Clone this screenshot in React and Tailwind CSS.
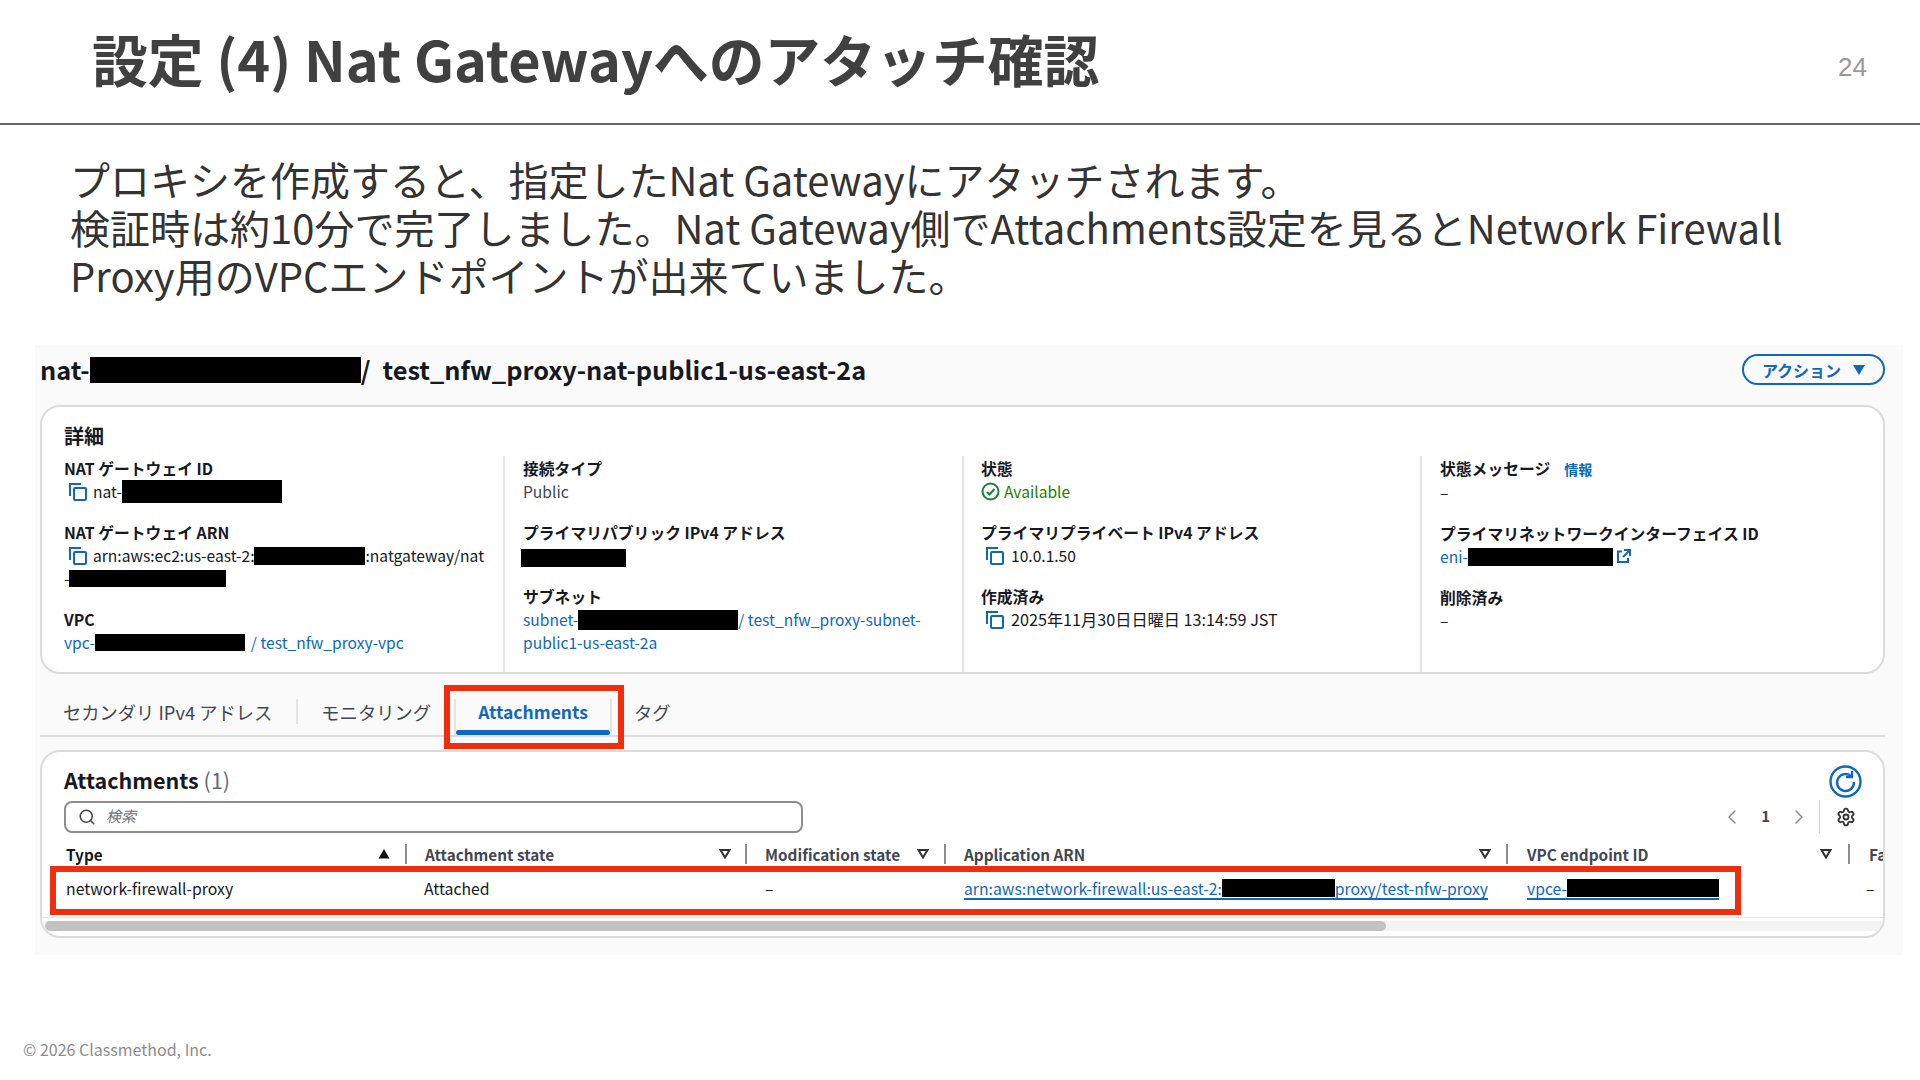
import { Search, ChevronLeft, ChevronRight, Settings } from 'lucide-react'

const Redact = ({ className }) => <span className={`inline-block bg-black align-middle ${className}`} />

const CopyIcon = () => (
  <svg width="20" height="19" viewBox="0 0 20 19" fill="none" stroke="#1166bb" strokeWidth="2" className="shrink-0">
    <path d="M2 14V2h11" />
    <rect x="6" y="6" width="12" height="12" rx="1" />
  </svg>
)

const Caret = ({ filled }) => (
  <svg width="12" height="10" viewBox="0 0 12 10" className="shrink-0">
    {filled ? (
      <path d="M6 0l5.500 9.500H.5z" fill="#111" />
    ) : (
      <path d="M1.500 1h9L6 8.500z" fill="none" stroke="#333" strokeWidth="2" />
    )}
  </svg>
)

function Field({ label, children, extra }) {
  return (
    <div className="mb-[18px]">
      <div className="text-[15.8px] font-bold text-[#16191f]">
        {label}
        {extra}
      </div>
      <div className="text-[#16191f]">{children}</div>
    </div>
  )
}

const headers = [
  { name: 'Type', w: 'w-[339px]', sort: true, pad: 'pr-[15px]' },
  { name: 'Attachment state', w: 'w-[340px]', pad: 'pl-[18px] pr-[14px] border-l-2' },
  { name: 'Modification state', w: 'w-[199px]', pad: 'pl-[18px] pr-[15px] border-l-2' },
  { name: 'Application ARN', w: 'w-[562px]', pad: 'pl-[18px] pr-[15px] border-l-2' },
  { name: 'VPC endpoint ID', w: 'w-[342px]', pad: 'pl-[19px] pr-[16px] border-l-2' },
]

export default function App() {
  return (
    <div className="relative w-[1920px] h-[1080px] overflow-hidden bg-white font-['Noto_Sans_CJK_JP','Noto_Sans',sans-serif]">
      <header className="flex h-[125px] items-center justify-between border-b-2 border-[#666666] pl-[92px] pr-[53px]">
        <h1 className="mb-[7px] text-[55.8px] font-bold leading-none text-[#404040]">設定 (4) Nat Gatewayへのアタッチ確認</h1>
        <span className="mt-[12px] font-['Liberation_Sans',sans-serif] text-[26px] text-[#999999]">24</span>
      </header>

      <div className="pl-[70px] pt-[30px] text-[40px] leading-[48px] text-[#333333]">
        <div>プロキシを作成すると、指定したNat Gatewayにアタッチされます。</div>
        <div>検証時は約10分で完了しました。Nat Gateway側でAttachments設定を見るとNetwork Firewall</div>
        <div>Proxy用のVPCエンドポイントが出来ていました。</div>
      </div>

      <section className="ml-[35px] mt-[46px] h-[610px] w-[1868px] bg-[#fafafa] px-[5px] pt-[8px]">
        <div className="flex h-[52px] items-start justify-between pr-[13px]">
          <h2 className="flex h-[34px] items-center text-[25.3px] font-bold text-[#16191f]">
            nat-
            <Redact className="h-[26px] w-[271px]" />
            <span>/</span>
            <span className="ml-[12px]">test_nfw_proxy-nat-public1-us-east-2a</span>
          </h2>
          <button className="mt-[1px] flex h-[31px] w-[143px] items-center justify-center gap-[12px] rounded-full border-2 border-[#0f68bd] text-[16px] font-bold text-[#0f68bd]">
            アクション
            <svg width="12" height="10" viewBox="0 0 12 10"><path d="M0 0h12L6 10z" fill="#0f68bd" /></svg>
          </button>
        </div>

        {/* 詳細 */}
        <div className="h-[269px] w-[1845px] rounded-[20px] border-2 border-[#dcdcdc] bg-white pl-[22px] pt-[14px] text-[15.6px] leading-[23px]">
          <div className="text-[20px] font-bold leading-[30px] text-[#16191f]">詳細</div>
          <div className="mt-[5px] grid h-[199px] grid-cols-[439px_459px_458px_451px]">
            <div>
              <div className="pt-[1px]">
                <Field label="NAT ゲートウェイ ID">
                  <div className="flex items-center gap-[5px] pl-[4px]">
                    <CopyIcon />
                    nat-
                    <Redact className="-ml-[5px] h-[23px] w-[160px]" />
                  </div>
                </Field>
                <Field label="NAT ゲートウェイ ARN">
                  <div className="flex items-center gap-[5px] pl-[4px]">
                    <CopyIcon />
                    <span className="flex items-center whitespace-nowrap">
                      arn:aws:ec2:us-east-2:
                      <Redact className="h-[18px] w-[111px]" />
                      :natgateway/nat
                    </span>
                  </div>
                  <div className="flex items-center">
                    -<Redact className="h-[17px] w-[157px]" />
                  </div>
                </Field>
                <Field label="VPC">
                  <div className="flex items-center text-[#0f68bd]">
                    vpc-
                    <Redact className="h-[17px] w-[150px]" />
                    <span className="ml-[6px]">/ test_nfw_proxy-vpc</span>
                  </div>
                </Field>
              </div>
            </div>

            <div className="border-l-2 border-[#e4e4e4] pl-[18px] pt-[1px]">
              <Field label="接続タイプ">
                <span className="text-[#414750]">Public</span>
              </Field>
              <Field label="プライマリパブリック IPv4 アドレス">
                <Redact className="-ml-[2px] h-[18px] w-[105px]" />
              </Field>
              <Field label="サブネット">
                <div className="text-[#0f68bd]">
                  <div className="flex items-center whitespace-nowrap">
                    subnet-
                    <Redact className="h-[20px] w-[160px]" />
                    / test_nfw_proxy-subnet-
                  </div>
                  <div>public1-us-east-2a</div>
                </div>
              </Field>
            </div>

            <div className="border-l-2 border-[#e4e4e4] pl-[17px] pt-[1px]">
              <Field label="状態">
                <div className="flex items-center gap-[4px] text-[#1d8102]">
                  <svg width="19" height="19" viewBox="0 0 19 19" fill="none" stroke="#1a7f37" strokeWidth="2" className="shrink-0">
                    <circle cx="9.5" cy="9.5" r="8" />
                    <path d="M6 10l2.500 2.500L13.500 7" />
                  </svg>
                  Available
                </div>
              </Field>
              <Field label="プライマリプライベート IPv4 アドレス">
                <div className="flex items-center gap-[6px] pl-[4px]">
                  <CopyIcon />
                  10.0.1.50
                </div>
              </Field>
              <Field label="作成済み">
                <div className="flex items-center gap-[6px] pl-[4px] text-[16.2px]">
                  <CopyIcon />
                  2025年11月30日日曜日 13:14:59 JST
                </div>
              </Field>
            </div>

            <div className="border-l-2 border-[#e4e4e4] pl-[18px] pt-[1px]">
              <Field
                label="状態メッセージ"
                extra={<span className="ml-[14px] text-[14px] font-bold text-[#0f68bd]">情報</span>}
              >
                –
              </Field>
              <Field label="プライマリネットワークインターフェイス ID">
                <div className="flex items-center gap-[3px] text-[#0f68bd]">
                  eni-
                  <Redact className="-ml-[3px] h-[18px] w-[145px]" />
                  <svg width="15" height="15" viewBox="0 0 15 15" fill="none" stroke="#0f68bd" strokeWidth="2" className="shrink-0">
                    <path d="M6 2.500H2v10.500h10V9M8 1h6v6M14 1L7 8" />
                  </svg>
                </div>
              </Field>
              <Field label="削除済み">–</Field>
            </div>
          </div>
        </div>

        {/* タブ */}
        <div className="flex h-[63px] w-[1845px] items-end border-b-2 border-[#dcdcdc] pl-[23px] text-[18.3px] text-[#414750]">
          <div className="flex h-[45px] items-start pt-[9px]">
            <span className="pr-[24px] leading-[26px]">セカンダリ IPv4 アドレス</span>
            <span className="h-[25px] border-l-2 border-[#e4e4e4]" />
            <span className="pl-[23px] pr-[23px] leading-[26px]">モニタリング</span>
            <span className="relative flex h-[36px] w-[158px] justify-center border-x-2 border-[#e4e4e4] border-b-0 text-[17.5px] font-bold leading-[26px] text-[#0f68bd]">
              Attachments
              <span className="absolute inset-x-0 bottom-0 h-[5px] rounded-full bg-[#0f68bd]" />
              <span className="absolute -bottom-[14px] -left-[12px] -right-[14px] -top-[14px] border-[6px] border-[#ee2e0c]" />
            </span>
            <span className="pl-[22px] leading-[26px]">タグ</span>
          </div>
        </div>

        {/* Attachments */}
        <div className="relative mt-[13px] h-[188px] w-[1845px] overflow-hidden rounded-[20px] border-2 border-[#dcdcdc] bg-white pt-[10px] text-[#16191f]">
          <div className="flex justify-between pl-[22px] pr-[19px]">
            <div className="pt-[1px] text-[21.500px] font-bold leading-[34px]">
              Attachments <span className="font-normal text-[#5f6b7a]">(1)</span>
            </div>
            <div className="flex h-[38px] w-[38px] items-center justify-center">
              <svg width="33" height="33" viewBox="0 0 33 33" fill="none" stroke="#0f68bd" strokeWidth="2.4">
                <circle cx="16.5" cy="16.5" r="15" />
                <path d="M22.500 11.500A8.500 8.500 0 1 0 25 17" />
                <path d="M23 6v6h-6" />
              </svg>
            </div>
          </div>

          <div className="flex items-center justify-between pl-[22px] pr-[27px]">
            <div className="flex h-[32px] w-[739px] items-center gap-[10px] rounded-[8px] border-2 border-[#8d8d8d] pl-[12px]">
              <Search size={18} color="#414750" strokeWidth={2} />
              <span className="text-[15px] italic text-[#727272]">検索</span>
            </div>
            <div className="flex h-[33px] items-center text-[#414750]">
              <ChevronLeft size={24} color="#8d8d8d" strokeWidth={1.5} />
              <span className="mx-[17px] text-[15px] font-bold">1</span>
              <ChevronRight size={24} color="#8d8d8d" strokeWidth={1.5} />
              <span className="ml-[8px] mr-[16px] h-[33px] border-l border-[#d0d0d0]" />
              <Settings size={20} color="#333" strokeWidth={2.2} />
            </div>
          </div>

          {/* テーブル */}
          <div className="mt-[9px] flex h-[24px] items-center pl-[24px] text-[15.3px] font-bold leading-[20px] text-[#414750]">
            {headers.map((h) => (
              <div key={h.name} className={`flex h-[20px] shrink-0 items-center justify-between border-[#8d8d8d] ${h.w} ${h.pad}`}>
                <span className={h.sort ? 'text-[#16191f]' : ''}>{h.name}</span>
                <Caret filled={h.sort} />
              </div>
            ))}
            <div className="h-[20px] shrink-0 border-l-2 border-[#8d8d8d] pl-[19px]">Fa</div>
          </div>

          <div className="relative flex h-[52px] items-center border-b border-[#e4e4e4] pb-[5px] pl-[24px] text-[15.8px] text-[#16191f]">
            <div className="w-[339px] shrink-0">network-firewall-proxy</div>
            <div className="w-[342px] shrink-0 pl-[19px]">Attached</div>
            <div className="w-[198px] shrink-0 pl-[18px]">–</div>
            <div className="w-[562px] shrink-0 pl-[19px]">
              <span className="flex w-fit items-center whitespace-nowrap border-b-2 border-[#0f68bd] text-[15.75px] leading-[19px] text-[#0f68bd]">
                arn:aws:network-firewall:us-east-2:
                <Redact className="h-[18px] w-[113px]" />
                proxy/test-nfw-proxy
              </span>
            </div>
            <div className="w-[341px] shrink-0 pl-[20px]">
              <span className="flex w-fit items-center border-b-2 border-[#0f68bd] text-[15.7px] leading-[19px] text-[#0f68bd]">
                vpce-
                <Redact className="h-[18px] w-[152px]" />
              </span>
            </div>
            <div className="pl-[18px]">–</div>
            <span className="absolute left-[8px] top-0 h-[49px] w-[1691px] border-[6px] border-[#ee2e0c]" />
          </div>

          <div className="mt-[3px] h-[10px] w-full bg-[#f3f3f3] pl-[3px]">
            <div className="h-[10px] w-[1341px] rounded-full bg-[#c2c2c2]" />
          </div>
        </div>
      </section>

      <footer className="mt-[83px] pl-[23px] text-[16px] leading-[22px] text-[#8c8c8c]">© 2026 Classmethod, Inc.</footer>
    </div>
  )
}
